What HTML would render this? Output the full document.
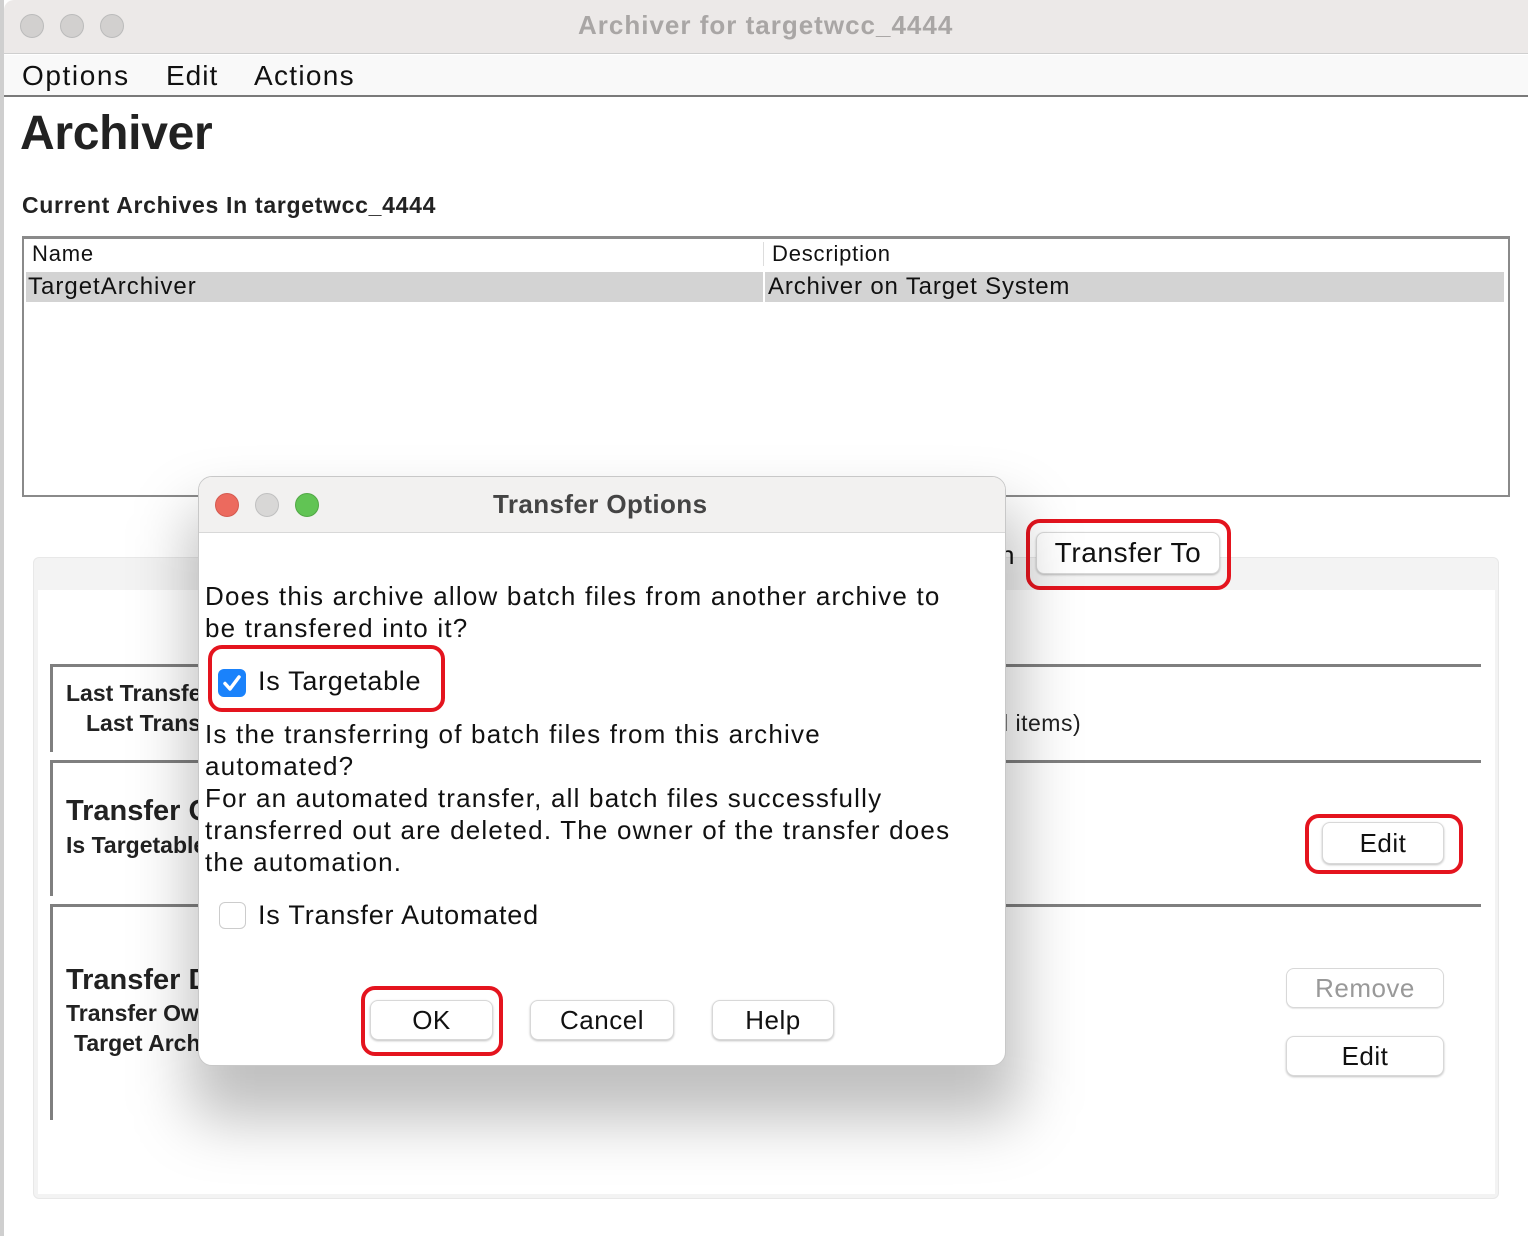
<!DOCTYPE html>
<html><head><meta charset="utf-8"><style>
*{margin:0;padding:0;box-sizing:border-box}
body{width:1528px;height:1236px;overflow:hidden;background:#fff;position:relative;font-family:"Liberation Sans",sans-serif;color:#111}
.a{position:absolute;white-space:nowrap}
.btn{position:absolute;background:#fff;border:1px solid #d8d8d8;border-radius:8px;box-shadow:0 1px 2px rgba(0,0,0,.25);text-align:center;font-size:26px;color:#111;letter-spacing:0.5px}
.red{position:absolute;border:4px solid #e4141e;border-radius:14px}
.b{font-weight:bold;color:#222}
.line{position:absolute;background:#7f7f7f}
</style></head><body>
<div class="a" style="left:0;top:0;width:4px;height:1236px;background:#cfcfcf"></div>
<div class="a" style="left:4px;top:0;width:1524px;height:54px;background:#ece9e8;border-bottom:1px solid #cfcfcf;border-top-left-radius:10px"></div>
<div class="a" style="left:20px;top:14px;width:24px;height:24px;border-radius:50%;background:#d2d0cf;border:1px solid #bbb"></div>
<div class="a" style="left:60px;top:14px;width:24px;height:24px;border-radius:50%;background:#d2d0cf;border:1px solid #bbb"></div>
<div class="a" style="left:100px;top:14px;width:24px;height:24px;border-radius:50%;background:#d2d0cf;border:1px solid #bbb"></div>
<div class="a b" style="left:578px;top:10px;font-size:26px;color:#a9a6a5;letter-spacing:1px">Archiver for targetwcc_4444</div>
<div class="a" style="left:4px;top:55px;width:1524px;height:42px;background:#f9f9f9;border-bottom:2px solid #7a7a7a"></div>
<div class="a" style="left:22px;top:60px;font-size:28px;letter-spacing:1.6px">Options</div>
<div class="a" style="left:166px;top:60px;font-size:28px;letter-spacing:1px">Edit</div>
<div class="a" style="left:254px;top:60px;font-size:28px;letter-spacing:1.3px">Actions</div>
<div class="a b" style="left:20px;top:106px;font-size:48px;color:#222;letter-spacing:-0.3px">Archiver</div>
<div class="a b" style="left:22px;top:192px;font-size:23px;letter-spacing:0.7px">Current Archives In targetwcc_4444</div>
<div class="a" style="left:22px;top:236px;width:1488px;height:261px;border:2px solid #8a8a8a;border-top-width:3px;background:#fff"></div>
<div class="a" style="left:763px;top:242px;width:1px;height:24px;background:#ddd"></div>
<div class="a" style="left:32px;top:241px;font-size:22px;letter-spacing:0.8px">Name</div>
<div class="a" style="left:772px;top:241px;font-size:22px;letter-spacing:0.8px">Description</div>
<div class="a" style="left:26px;top:272px;width:1478px;height:30px;background:#d3d3d3"></div>
<div class="a" style="left:763px;top:272px;width:2px;height:30px;background:#fff"></div>
<div class="a" style="left:28px;top:273px;font-size:24px;letter-spacing:1px">TargetArchiver</div>
<div class="a" style="left:768px;top:273px;font-size:24px;letter-spacing:0.85px">Archiver on Target System</div>
<div class="a" style="left:33px;top:557px;width:1466px;height:642px;background:#f3f3f3;border:1px solid #e8e8e8;border-radius:6px"></div>
<div class="a" style="left:38px;top:590px;width:1457px;height:604px;background:#fff"></div>
<div class="a" style="left:1000px;top:540px;font-size:26px">n</div>
<div class="btn" style="left:1036px;top:532px;width:184px;height:42px;line-height:40px;font-size:28px;letter-spacing:0.6px">Transfer To</div>
<div class="red" style="left:1026px;top:519px;width:205px;height:71px"></div>
<div class="line" style="left:50px;top:664px;width:1431px;height:3px"></div>
<div class="line" style="left:50px;top:664px;width:3px;height:88px"></div>
<div class="line" style="left:50px;top:760px;width:1431px;height:3px"></div>
<div class="line" style="left:50px;top:760px;width:3px;height:136px"></div>
<div class="line" style="left:50px;top:904px;width:1431px;height:3px"></div>
<div class="line" style="left:50px;top:904px;width:3px;height:216px"></div>
<div class="a b" style="left:66px;top:680px;font-size:23px">Last Transfer</div>
<div class="a b" style="left:86px;top:710px;font-size:23px">Last Transfer</div>
<div class="a" style="left:1003px;top:710px;font-size:23px;color:#222;letter-spacing:0.5px">l items)</div>
<div class="a b" style="left:66px;top:795px;font-size:29px">Transfer Options</div>
<div class="a b" style="left:66px;top:832px;font-size:23px">Is Targetable</div>
<div class="btn" style="left:1322px;top:822px;width:122px;height:42px;line-height:40px">Edit</div>
<div class="red" style="left:1305px;top:814px;width:158px;height:60px"></div>
<div class="a b" style="left:66px;top:964px;font-size:29px">Transfer Details</div>
<div class="a b" style="left:66px;top:1000px;font-size:23px">Transfer Owner</div>
<div class="a b" style="left:74px;top:1030px;font-size:23px">Target Archive</div>
<div class="btn" style="left:1286px;top:968px;width:158px;height:40px;line-height:38px;color:#999;box-shadow:0 1px 1px rgba(0,0,0,.1)">Remove</div>
<div class="btn" style="left:1286px;top:1036px;width:158px;height:40px;line-height:38px">Edit</div>
<div class="a" style="left:190px;top:510px;width:830px;height:610px;border-radius:20px;background:rgba(0,0,0,.25);filter:blur(30px)"></div>
<div class="a" style="left:198px;top:476px;width:808px;height:590px;background:#fff;border:1px solid #c8c8c8;border-radius:14px;overflow:hidden">
  <div class="a" style="left:0;top:0;width:808px;height:56px;background:#f2f1f0;border-bottom:1px solid #d8d8d8"></div>
  <div class="a" style="left:16px;top:16px;width:24px;height:24px;border-radius:50%;background:#ec6a5e;border:1px solid #d45a50"></div>
  <div class="a" style="left:56px;top:16px;width:24px;height:24px;border-radius:50%;background:#d8d7d6;border:1px solid #c0c0c0"></div>
  <div class="a" style="left:96px;top:16px;width:24px;height:24px;border-radius:50%;background:#61c454;border:1px solid #52a846"></div>
  <div class="a b" style="left:294px;top:12px;font-size:26px;color:#444;letter-spacing:0.4px">Transfer Options</div>
</div>
<div class="a" style="left:205px;top:580px;font-size:26px;line-height:32px;color:#111;letter-spacing:1.2px">Does this archive allow batch files from another archive to<br>be transfered into it?</div>
<div class="a" style="left:218px;top:669px;width:28px;height:28px;border-radius:6px;background:#1a82fb"></div>
<svg class="a" style="left:218px;top:669px" width="28" height="28" viewBox="0 0 28 28"><path d="M7 14.5 L12 20 L21 8" stroke="#fff" stroke-width="3.5" fill="none" stroke-linecap="round" stroke-linejoin="round"/></svg>
<div class="a" style="left:258px;top:666px;font-size:27px;letter-spacing:0.7px">Is Targetable</div>
<div class="red" style="left:208px;top:645px;width:237px;height:67px"></div>
<div class="a" style="left:205px;top:718px;font-size:26px;line-height:32px;letter-spacing:1.2px">Is the transferring of batch files from this archive<br>automated?<br>For an automated transfer, all batch files successfully<br>transferred out are deleted. The owner of the transfer does<br>the automation.</div>
<div class="a" style="left:219px;top:902px;width:27px;height:27px;border-radius:6px;border:1px solid #ccc;background:#fff"></div>
<div class="a" style="left:258px;top:900px;font-size:27px;letter-spacing:0.8px">Is Transfer Automated</div>
<div class="btn" style="left:370px;top:1000px;width:123px;height:40px;line-height:38px">OK</div>
<div class="red" style="left:361px;top:986px;width:142px;height:70px"></div>
<div class="btn" style="left:530px;top:1000px;width:144px;height:40px;line-height:38px">Cancel</div>
<div class="btn" style="left:712px;top:1000px;width:122px;height:40px;line-height:38px">Help</div>
</body></html>
